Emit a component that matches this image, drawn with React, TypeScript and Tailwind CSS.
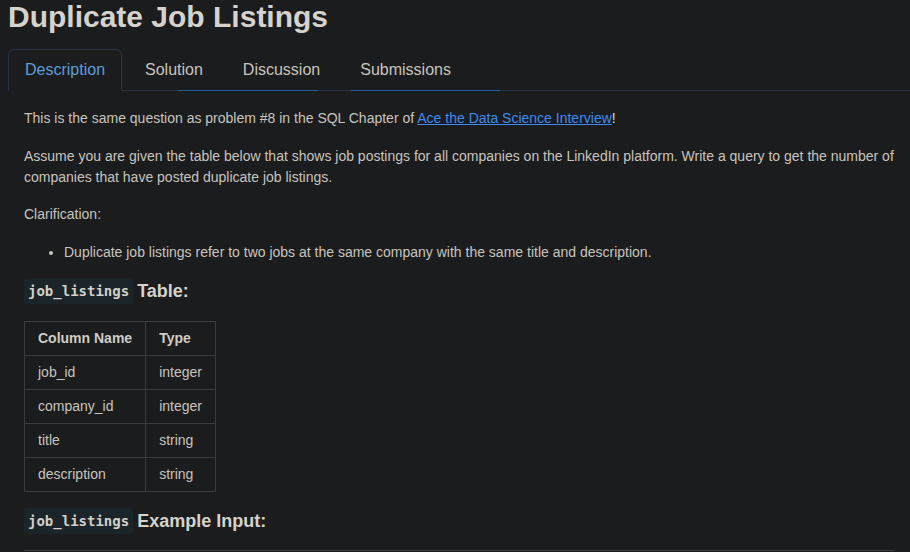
import React from "react";

const sans = { fontFamily: '"Liberation Sans", Arial, sans-serif' };
const mono = { fontFamily: '"DejaVu Sans Mono", "Liberation Mono", monospace' };

function Code({ children }: { children: React.ReactNode }) {
  return (
    <code
      className="rounded-[3px] bg-[#1b2529] px-[4px] py-[2px] text-[14px] font-bold text-[#d3cfc9]"
      style={mono}
    >
      {children}
    </code>
  );
}

const schema = [
  ["job_id", "integer"],
  ["company_id", "integer"],
  ["title", "string"],
  ["description", "string"],
];

const example = [
  ["945", "345", "Data Analyst", "Lorem ipsum dolor sit amet, consectetur adipiscing elit."],
  ["164", "345", "Data Analyst", "Lorem ipsum dolor sit amet, consectetur adipiscing elit."],
  ["172", "244", "Data Engineer", "Lorem ipsum dolor sit amet, consectetur adipiscing elit."],
];

export default function App() {
  return (
    <div className="h-[552px] w-[910px] overflow-hidden bg-[#1b1c1e] pl-2 text-[#c8c4bd]" style={sans}>
      <h1 className="m-0 h-[34px] text-[30px] font-bold leading-[34px] text-[#d6d2cc]">
        Duplicate Job Listings
      </h1>

      <div className="relative mt-[15px] flex border-b border-[#273446]">
        <div className="-mb-px rounded-t-[6px] border border-b-0 border-[#243447] bg-[#1b1c1e] px-4 py-2 text-[16px] leading-6 text-[#5c9fd6]">
          Description
        </div>
        <div className="-mb-px ml-[6px] border border-transparent px-4 py-2 text-[16px] leading-6 text-[#c8c4bd]">
          Solution
        </div>
        <div className="-mb-px ml-[6px] border border-transparent px-4 py-2 text-[16px] leading-6 text-[#c8c4bd]">
          Discussion
        </div>
        <div className="-mb-px ml-[6px] border border-transparent px-4 py-2 text-[16px] leading-6 text-[#c8c4bd]">
          Submissions
        </div>
        <div className="absolute bottom-[-1px] left-[170px] h-px w-[140px] bg-[#1a5fa2]" />
        <div className="absolute bottom-[-1px] left-[343px] h-px w-[149px] bg-[#1a5fa2]" />
      </div>

      <div className="pl-4 pr-4 pt-[17px] text-[14px] leading-[21px]">
        <p className="mb-[17px]">
          This is the same question as problem #8 in the SQL Chapter of{" "}
          <a className="text-[#3d8bf2] underline">Ace the Data Science Interview</a>
          <span className="text-[#ddd]">!</span>
        </p>
        <p className="mb-4">
          Assume you are given the table below that shows job postings for all companies on the LinkedIn platform. Write a query to get the number of companies that have posted duplicate job listings.
        </p>
        <p className="mb-[17px]">Clarification:</p>
        <ul className="mb-[17px] list-disc pl-10">
          <li>Duplicate job listings refer to two jobs at the same company with the same title and description.</li>
        </ul>

        <h3 className="mb-[19px] flex h-[22px] items-center gap-[4px] text-[18px] font-bold leading-[22px] text-[#d6d2cc]">
          <Code>job_listings</Code>
          <span>Table:</span>
        </h3>

        <table className="border-collapse">
          <thead>
            <tr>
              <th className="border border-[#3a3c3f] px-[13px] py-[6px] text-left font-bold text-[#d0ccc6]">Column Name</th>
              <th className="border border-[#3a3c3f] px-[13px] py-[6px] text-left font-bold text-[#d0ccc6]">Type</th>
            </tr>
          </thead>
          <tbody>
            {schema.map(([a, b]) => (
              <tr key={a}>
                <td className="border border-[#3a3c3f] px-[13px] py-[6px]">{a}</td>
                <td className="border border-[#3a3c3f] px-[13px] py-[6px]">{b}</td>
              </tr>
            ))}
          </tbody>
        </table>

        <h3 className="mb-[18px] mt-[18px] flex h-[22px] items-center gap-[4px] text-[18px] font-bold leading-[22px] text-[#d6d2cc]">
          <Code>job_listings</Code>
          <span>Example Input:</span>
        </h3>

        <div className="h-px w-[870px] bg-[#3a3c3f]" />
      </div>
    </div>
  );
}
